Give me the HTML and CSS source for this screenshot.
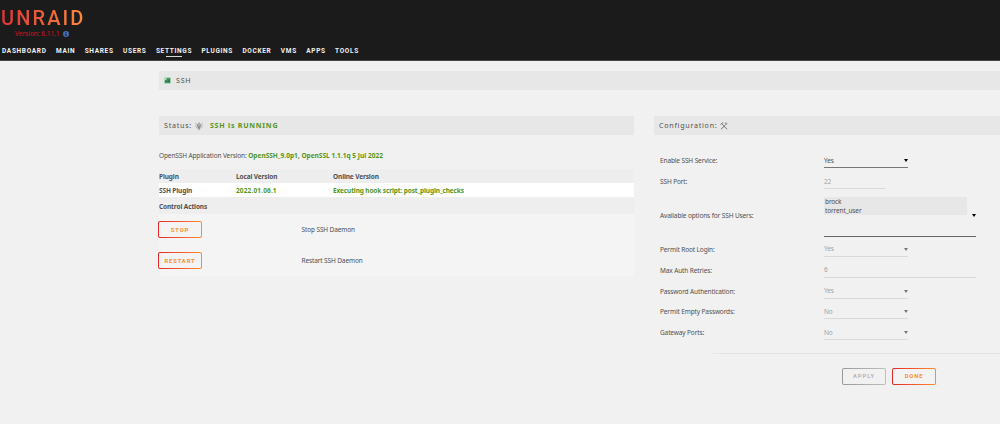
FILE: index.html
```
<!DOCTYPE html>
<html lang="en">
<head>
    <meta charset="UTF-8">
    <title>SSH</title>
    <link rel="stylesheet" href="styles.css">
</head>
<body>
    <header class="header">
        <div class="logo">UNRAID</div>
        <div class="version">
            <span>Version: 6.11.1</span>
            <svg class="info" viewBox="0 0 12 12">
                <circle cx="6" cy="6" r="6" fill="#486dba"/>
                <path d="M5 2.4h2v1.6H5zM4.4 5H7v3.2h.7v1.4H4.3V8.2H5V6.3h-.6z" fill="#1c1b1b"/>
            </svg>
        </div>
        <nav class="menu">
            <a>DASHBOARD</a>
            <a>MAIN</a>
            <a>SHARES</a>
            <a>USERS</a>
            <a class="active">SETTINGS</a>
            <a>PLUGINS</a>
            <a>DOCKER</a>
            <a>VMS</a>
            <a>APPS</a>
            <a>TOOLS</a>
        </nav>
    </header>

    <main class="content">
        <div class="title page-title">
            <svg class="app-icon" viewBox="0 0 16 16">
                <rect width="16" height="16" rx="2" fill="#a9dfba"/>
                <path d="M2 8l4-2V3h8v10H2z" fill="#39704c"/>
                <path d="M7 6h5M4 9h5" stroke="#62a77a" stroke-width="1.5"/>
            </svg>
            <span>SSH</span>
        </div>

        <div class="columns">
            <section class="status">
                <div class="title">
                    <span>Status:</span>
                    <svg class="title-icon bulb" viewBox="0 0 16 16" fill="none" stroke="#777" stroke-width="1.4">
                        <circle cx="8" cy="7" r="3.6" fill="#bbb"/>
                        <path d="M6.5 10v4.5h3V10M8 7v6M1 3l2 1M15 3l-2 1M.5 8h2M15.5 8h-2M2 12l1.5-1M14 12l-1.5-1M8 0v1.5"/>
                    </svg>
                    <b class="green">SSH is RUNNING</b>
                </div>
                <p class="app-version">OpenSSH Application Version: <b class="green">OpenSSH_9.0p1, OpenSSL 1.1.1q 5 Jul 2022</b></p>
                <div class="table">
                    <div class="row head">
                        <b>Plugin</b>
                        <b>Local Version</b>
                        <b>Online Version</b>
                    </div>
                    <div class="row plugin">
                        <b>SSH Plugin</b>
                        <b class="green number">2022.01.06.1</b>
                        <b class="green">Executing hook script: post_plugin_checks</b>
                    </div>
                    <div class="row actions-head"><b>Control Actions</b></div>
                    <div class="actions">
                        <div class="action">
                            <button class="btn">STOP</button>
                            <span>Stop SSH Daemon</span>
                        </div>
                        <div class="action">
                            <button class="btn">RESTART</button>
                            <span>Restart SSH Daemon</span>
                        </div>
                    </div>
                </div>
            </section>

            <section class="config">
                <div class="title">
                    <span>Configuration:</span>
                    <svg class="title-icon" viewBox="0 0 16 16" fill="none" stroke="#666" stroke-width="1.8">
                        <path d="M4 4l10 10.5M2 14.5L11 6"/>
                        <path d="M1 5l4-3.5 1.5.5M14.5 3l-2.5 2-1.5-1.5L12 1"/>
                    </svg>
                </div>
                <div class="form">
                    <div class="field">
                        <label>Enable SSH Service:</label>
                        <div class="select enabled"><span>Yes</span><i class="arrow"></i></div>
                    </div>
                    <div class="field">
                        <label>SSH Port:</label>
                        <div class="select port"><span>22</span></div>
                    </div>
                    <div class="field users">
                        <label>Available options for SSH Users:</label>
                        <div class="list">
                            <div class="options">
                                <span>brock</span>
                                <span>torrent_user</span>
                            </div>
                            <i class="arrow"></i>
                        </div>
                    </div>
                    <div class="field">
                        <label>Permit Root Login:</label>
                        <div class="select"><span>Yes</span><i class="arrow"></i></div>
                    </div>
                    <div class="field">
                        <label>Max Auth Retries:</label>
                        <div class="select wide"><span>6</span></div>
                    </div>
                    <div class="field">
                        <label>Password Authentication:</label>
                        <div class="select"><span>Yes</span><i class="arrow"></i></div>
                    </div>
                    <div class="field">
                        <label>Permit Empty Passwords:</label>
                        <div class="select"><span>No</span><i class="arrow"></i></div>
                    </div>
                    <div class="field">
                        <label>Gateway Ports:</label>
                        <div class="select"><span>No</span><i class="arrow"></i></div>
                    </div>
                </div>
                <div class="buttons">
                    <button class="btn disabled">APPLY</button>
                    <button class="btn">DONE</button>
                </div>
            </section>
        </div>
    </main>
</body>
</html>
```
FILE: styles.css
```
* {
    box-sizing: border-box;
}

body {
    margin: 0;
    height: 424px;
    overflow: hidden;
    background-color: #f1f1f1;
    color: #505050;
    font-family: "Noto Sans", sans-serif;
    font-size: 6.5px;
    line-height: 10px;
    letter-spacing: -0.12px;
}

.header {
    height: 61px;
    background-color: #1c1b1b;
    border-bottom: 1px solid #4a4444;
}

.logo {
    width: 86px;
    height: 28px;
    padding: 4px 0 0 1px;
    font-family: Roboto, sans-serif;
    font-size: 20px;
    font-weight: 500;
    line-height: 28px;
    letter-spacing: 2.1px;
    color: transparent;
    background: linear-gradient(90deg, #e03237, #fd8c3c);
    -webkit-background-clip: text;
    background-clip: text;
}

.version {
    display: flex;
    align-items: center;
    gap: 3px;
    height: 11px;
    padding-left: 15px;
    color: #d0141e;
    letter-spacing: 0;
}

.info {
    width: 6px;
    height: 6px;
}

.menu {
    display: flex;
    gap: 9.4px;
    padding: 7px 0 0 2px;
    color: #f2f2f2;
    font-family: Roboto, sans-serif;
    font-size: 6.5px;
    font-weight: 700;
    letter-spacing: 0.68px;
}

.menu .active {
    position: relative;
}

.menu .active::after {
    content: "";
    position: absolute;
    left: 10px;
    top: 10px;
    width: 16px;
    height: 1px;
    background-color: #d8d8d8;
}

.green {
    color: #559620;
}

.content {
    padding: 10px 0 0 159px;
}

.title {
    display: flex;
    align-items: center;
    height: 19px;
    padding: 0 0 1px 5px;
    background-color: #e7e7e7;
    font-size: 7.1px;
    letter-spacing: 0.75px;
}

.page-title {
    gap: 5px;
    margin-bottom: 26px;
}

.app-icon {
    width: 7px;
    height: 7px;
}

.title-icon {
    width: 8px;
    height: 8px;
    margin: 1px 0 0 3px;
}

.bulb {
    margin-right: 7px;
}

.columns {
    display: grid;
    grid-template-columns: 475px 347px;
    column-gap: 20px;
    align-items: start;
}

.app-version {
    margin: 16px 0 8px;
}

.app-version .green {
    letter-spacing: 0.03px;
}

.row {
    display: grid;
    grid-template-columns: 77px 97px 1fr;
    align-items: center;
    height: 14px;
    padding-top: 1px;
}

.head,
.actions-head {
    background-color: #eeeeee;
}

.plugin {
    background-color: #ffffff;
}

.number {
    letter-spacing: 0.15px;
}

.actions-head {
    height: 17px;
    padding-top: 2px;
}

.actions {
    height: 62px;
    background-color: #f4f4f4;
}

.action {
    display: grid;
    grid-template-columns: 142.5px 1fr;
    align-items: center;
    height: 31px;
}

.btn {
    width: 44px;
    height: 17px;
    padding: 0;
    border: 1px solid transparent;
    border-radius: 2px;
    background: linear-gradient(#f3f3f3, #f3f3f3) padding-box, linear-gradient(90deg, #e22828, #ff8c2f) border-box;
    color: #ff8c2f;
    font-family: Roboto, sans-serif;
    font-size: 5.8px;
    font-weight: 700;
    letter-spacing: 0.9px;
    line-height: 14px;
}

.btn.disabled {
    background: linear-gradient(#f1f1f1, #f1f1f1) padding-box, linear-gradient(90deg, #999999, #bfbfbf) border-box;
    color: #b5b5b5;
}

.action .btn {
    margin-left: -1px;
}

.form {
    padding: 16px 0 9px 6px;
}

.field {
    display: grid;
    grid-template-columns: 163px 153px;
    align-items: center;
    column-gap: 1px;
    height: 20.8px;
}

.select {
    display: flex;
    align-items: center;
    justify-content: space-between;
    width: 84px;
    height: 15px;
    margin-bottom: 1px;
    padding-top: 1px;
    border-bottom: 1px solid #d9d9d9;
    color: #a2a2a2;
}

.select.enabled {
    border-color: #777777;
    color: #505050;
}

.select.port {
    width: 61px;
}

.select.wide {
    width: 152px;
}

.arrow {
    width: 0;
    height: 0;
    border: solid transparent;
    border-width: 3px 2px 0;
    border-top-color: #777777;
}

.enabled .arrow,
.list .arrow {
    border-top-color: #000000;
}

.users {
    height: 47px;
}

.list {
    display: flex;
    align-items: center;
    justify-content: space-between;
    width: 152px;
    height: 42px;
    border-bottom: 1px solid #666666;
}

.options {
    display: flex;
    flex-direction: column;
    align-self: flex-start;
    width: 143px;
    margin-top: 2px;
    padding-left: 1px;
    background-color: #e7e7e7;
    line-height: 9px;
}

.buttons {
    display: flex;
    gap: 6px;
    margin-left: 59px;
    padding: 14px 0 0 129px;
    border-top: 1px solid #e4e4e4;
}
```
